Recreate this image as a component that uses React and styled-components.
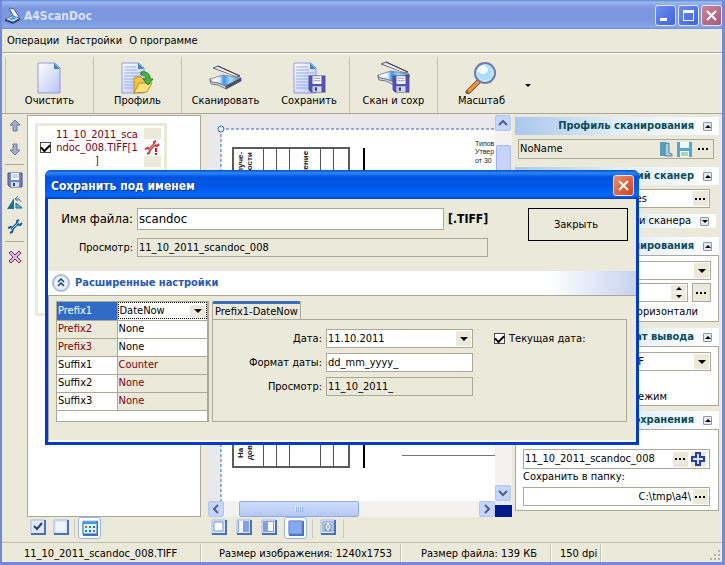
import React, { useState } from 'react'
import styled, { createGlobalStyle } from 'styled-components'

const GlobalStyle = createGlobalStyle`
  * {
    box-sizing: border-box;
  }
  body {
    margin: 0;
    color: #000000;
    font-family: "DejaVu Sans Condensed", "Noto Sans", sans-serif;
    font-size: 11px;
    line-height: 14px;
  }
  button, input, select {
    font: inherit;
    color: inherit;
    margin: 0;
    padding: 0;
    border: 0;
    border-radius: 0;
    background: none;
    min-width: 0;
  }
  svg {
    display: block;
    flex: none;
  }
`

const Styled = {
    Window: styled.div`
    display: flex;
    flex-direction: column;
    min-height: 100vh;
    background: #ebe9d9;
    border: solid #7489dc;
    border-width: 0 3px 3px 2px;
  `,
    TitleBar: styled.header`
    display: flex;
    align-items: center;
    gap: 2px;
    height: 29px;
    padding: 2px 0 0 2px;
    background: linear-gradient(#5c86d6 0, #9db9f0 2px, #7d98e2 8px, #7c96e0 20px, #82a8ec 27px, #708ddc 29px);
  `,
    Title: styled.h1`
    flex: 1;
    margin: 0;
    font-size: 12px;
    line-height: 18px;
    color: #d8e3fa;
  `,
    Caption: styled.button`
    display: flex;
    align-items: center;
    justify-content: center;
    width: 21px;
    height: 21px;
    border: 1px solid #dfe7fb;
    border-radius: 3px;
    background: ${props => props.$background || 'linear-gradient(135deg, #6b8df0, #3f62dd)'};
  `,
    Menu: styled.nav`
    display: flex;
    align-items: center;
    gap: 7px;
    height: 24px;
    padding: 0 5px;
    border-bottom: 1px solid #aca899;
  `,
    Toolbar: styled.div`
    display: flex;
    height: 61px;
    padding: 3px 3px 0;
    border-top: 1px solid #ffffff;
    border-bottom: 1px solid #aca899;
  `,
    ToolGroup: styled.div`
    display: flex;
    border-left: 1px solid #c6c3b3;
  `,
    Tool: styled.button`
    display: flex;
    flex-direction: column;
    align-items: center;
    width: ${props => props.$width || 87}px;
    padding-top: 3px;
  `,
    ToolArrow: styled.button`
    display: flex;
    align-items: center;
  `,
    Body: styled.main`
    display: flex;
    flex: 1;
    padding-top: 1px;
  `,
    Side: styled.div`
    display: flex;
    flex-direction: column;
    align-items: center;
    gap: 7px;
    width: 25px;
    padding: 3px;
  `,
    SideLine: styled.hr`
    width: 100%;
    margin: 0;
    border: 0;
    border-top: 1px solid #aca899;
  `,
    Column: styled.div`
    display: flex;
    flex-direction: column;
    width: 174px;
  `,
    Thumbs: styled.div`
    flex: 1;
    padding: 7px;
    background: #ffffff;
    border: 1px solid #aca899;
  `,
    Card: styled.div`
    display: flex;
    align-items: flex-start;
    gap: 4px;
    width: 132px;
    height: 193px;
    padding: 2px 3px 2px 2px;
    border: 3px solid #ebe9d9;
  `,
    CardName: styled.label`
    display: flex;
    flex: 1;
    align-items: center;
    gap: 4px;
    min-width: 0;
    color: #800010;
    line-height: 13px;
    text-align: center;
    overflow-wrap: anywhere;
    span {
      width: 84px;
    }
  `,
    CardAction: styled.button`
    display: flex;
    align-items: center;
    width: 17px;
    height: 39px;
    background: #ebe9d9;
  `,
    Check: styled.input`
    appearance: none;
    flex: none;
    display: grid;
    place-items: center;
    width: 11px;
    height: 11px;
    background: #ffffff;
    border: 1px solid #4a4a48;
    &:checked::after {
      content: '';
      width: 7px;
      height: 4px;
      margin-bottom: 2px;
      border: solid #000000;
      border-width: 0 0 2px 2px;
      transform: rotate(-45deg);
    }
  `,
    Strip: styled.div`
    display: flex;
    align-items: flex-start;
    gap: ${props => props.$gap || 3}px;
    height: 25px;
    padding: 0 1px;
  `,
    StripButton: styled.button`
    display: flex;
    align-items: center;
    justify-content: center;
    width: ${props => props.$pressed ? 23 : 20}px;
    height: ${props => props.$pressed ? 22 : 20}px;
    border-radius: 3px;
    border: 1px solid ${props => props.$pressed ? '#98b5e2' : 'transparent'};
    background: ${props => props.$pressed ? '#ffffff' : 'none'};
  `,
    StripLine: styled.span`
    width: 1px;
    height: 19px;
    margin-top: 2px;
    background: #cfccbc;
  `,
    Viewer: styled.div`
    display: flex;
    flex: 1;
    flex-direction: column;
    min-width: 0;
    margin-left: 7px;
  `,
    ViewerGrid: styled.div`
    display: grid;
    flex: 1;
    grid-template-columns: 1fr 17px;
    grid-template-rows: 1fr 16px;
    background: #e9e9ec;
  `,
    ScrollV: styled.div`
    display: flex;
    flex-direction: column;
    background: #f3f2ee;
  `,
    ScrollH: styled.div`
    display: flex;
    background: #f3f2ee;
  `,
    ScrollButton: styled.button`
    display: flex;
    align-items: center;
    justify-content: center;
    width: 16px;
    height: 16px;
    border: 1px solid #b2c5ef;
    border-radius: 2px;
    background: #c6d5fb;
  `,
    ThumbV: styled.div`
    width: 15px;
    height: 180px;
    margin: 14px 0 auto 1px;
    border: 1px solid #9fb6ea;
    border-radius: 2px;
    background: #c6d4fa;
  `,
    ThumbH: styled.div`
    display: flex;
    align-items: center;
    justify-content: center;
    width: 120px;
    margin: 0 auto 0 15px;
    border: 1px solid #8faae6;
    border-radius: 2px;
    background: linear-gradient(#cfdcfd, #b4c8f6);
  `,
    Corner: styled.div`
    margin-top: 4px;
    background: #001a8c;
  `,
    Options: styled.aside`
    display: flex;
    flex-direction: column;
    width: 204px;
    margin: 2px 3px 0;
  `,
    OptionsHead: styled.h2`
    display: flex;
    align-items: center;
    justify-content: flex-end;
    gap: 9px;
    height: ${props => props.$plain ? 14 : 18}px;
    margin: 0;
    padding-right: 7px;
    color: ${props => props.$plain ? '#000000' : '#0b4c57'};
    font-size: 11px;
    font-weight: ${props => props.$plain ? 'normal' : 'bold'};
    white-space: nowrap;
    background: linear-gradient(90deg, #a9c8ec, #e0edfb 50%, #ffffff);
  `,
    Toggle: styled.button`
    display: flex;
    align-items: center;
    justify-content: center;
    width: 9px;
    height: 9px;
    border: 1px solid #9296a0;
    border-radius: 1px;
    background: #e6e8ee;
  `,
    Group: styled.div`
    display: flex;
    flex-direction: column;
    gap: ${props => props.$gap || 3}px;
    height: ${props => props.$height}px;
    margin-bottom: ${props => props.$bottom || 0}px;
    padding: ${props => props.$padding || '5px 7px'};
    background: ${props => props.$plain ? 'none' : '#ffffff'};
    border: ${props => props.$plain ? 0 : 1}px solid #aca899;
    && > * {
      flex: none;
    }
  `,
    Row: styled.div`
    display: flex;
    gap: 4px;
  `,
    Field: styled.div`
    display: flex;
    align-items: center;
    flex: 1;
    min-width: 0;
    height: ${props => props.$height || 19}px;
    gap: ${props => props.$gap || 0}px;
    padding: 1px ${props => props.$right || 1}px 1px 1px;
    background: ${props => props.$readOnly ? '#ebe9d9' : '#ffffff'};
    border: 1px solid #aca899;
  `,
    Input: styled.input`
    flex: 1;
    width: 100%;
    padding-right: ${props => props.$right || 0}px;
    font-size: ${props => props.$size || 11}px;
    text-align: ${props => props.$align || 'left'};
  `,
    FieldButton: styled.button`
    display: flex;
    flex: none;
    align-items: center;
    justify-content: center;
    width: 15px;
    height: 15px;
    background: #ebe9d9;
  `,
    SideButton: styled.button`
    display: flex;
    align-items: center;
    justify-content: center;
    width: 19px;
    height: 19px;
    background: #ebe9d9;
    border: 1px solid #aca899;
  `,
    PlainLabel: styled.label`
    display: block;
    height: 16px;
    white-space: nowrap;
  `,
    RightText: styled.span`
    padding-right: ${props => props.$right}px;
    text-align: right;
    white-space: nowrap;
  `,
    SelectBox: styled.div`
    display: grid;
    grid-template-columns: 1fr 15px;
    align-items: center;
    min-width: 0;
    height: ${props => props.$height || 19}px;
    padding: 1px;
    background: #ffffff;
    border: ${props => props.$bare ? '1px dotted #000000' : '1px solid #aca899'};
    select {
      grid-area: 1 / 1 / 2 / 3;
      appearance: none;
      width: 100%;
    }
    span {
      grid-area: 1 / 2;
      display: flex;
      align-items: center;
      justify-content: center;
      height: ${props => props.$bare ? 13 : 15}px;
      background: #ebe9d9;
      pointer-events: none;
    }
  `,
    Spinner: styled.div`
    display: flex;
    flex-direction: column;
    gap: 1px;
    button {
      display: flex;
      align-items: center;
      justify-content: center;
      width: 15px;
      height: 7px;
      background: #ebe9d9;
    }
  `,
    Status: styled.footer`
    display: flex;
    height: 20px;
    border-top: 1px solid #c2bfae;
  `,
    StatusCell: styled.div`
    width: ${props => props.$width}px;
    padding: 3px 0 0 ${props => props.$left}px;
    margin-top: 1px;
    white-space: nowrap;
    border-right: 1px solid #c2bfae;
    box-shadow: 1px 0 #ffffff;
  `,
    Grip: styled.div`
    display: flex;
    align-items: flex-end;
    margin-left: auto;
    padding: 1px;
  `,
    // floats over the main window
    Dialog: styled.section`
    position: absolute;
    top: 170px;
    left: 45px;
    right: 86px;
    display: flex;
    flex-direction: column;
    background: #ebe9d9;
    border: solid #003bc9;
    border-width: 0 3px 3px;
    border-radius: 6px 6px 0 0;
  `,
    DialogTitle: styled.div`
    display: flex;
    align-items: center;
    height: 29px;
    margin: 0 -3px;
    padding: 2px 5px 0 6px;
    border-radius: 6px 6px 0 0;
    background: linear-gradient(#0a4fbe 0, #2d86fb 3px, #0053df 7px, #0057e7 16px, #0066fb 23px, #0064f8 26px, #003bb4 29px);
    h2 {
      flex: 1;
      margin: 0;
      color: #ffffff;
      font-size: 12px;
      line-height: 18px;
      text-shadow: 1px 1px #0a2f80;
    }
  `,
    NameArea: styled.div`
    display: grid;
    grid-template-columns: 85px 307px 40px 1fr;
    grid-template-rows: 22px 19px;
    column-gap: 4px;
    row-gap: 8px;
    align-items: center;
    padding: 9px 8px 14px 0;
  `,
    Label: styled.label`
    font-size: ${props => props.$size || 11}px;
    text-align: right;
    white-space: nowrap;
  `,
    Extension: styled.b`
    font-size: 12px;
  `,
    Preview: styled.div`
    display: flex;
    grid-column: 2 / 4;
  `,
    CloseButton: styled.button`
    grid-row: 1 / 3;
    grid-column: 4;
    align-self: start;
    justify-self: end;
    width: 100px;
    height: 33px;
    padding-right: 4px;
    border: 1px solid #000000;
  `,
    Advanced: styled.button`
    display: flex;
    align-items: center;
    gap: 5px;
    width: 100%;
    height: 25px;
    padding-left: 4px;
    color: #2859b6;
    font-weight: bold;
    background: linear-gradient(90deg, #ffffff 85%, #c6d3ef);
    border-bottom: 1px solid #aca899;
  `,
    AdvancedBody: styled.div`
    display: flex;
    gap: 3px;
    padding: 5px 9px 18px 7px;
    border-left: 1px solid #aca899;
    border-bottom: 2px solid #f8f7f0;
  `,
    TableBox: styled.div`
    width: 153px;
    height: 121px;
    background: #ffffff;
    border: 1px solid #aca899;
    border-right-width: 2px;
  `,
    Table: styled.table`
    width: 100%;
    table-layout: fixed;
    border-collapse: collapse;
    th, td {
      height: 18px;
      padding: 0 1px;
      font-weight: normal;
      text-align: left;
      border-bottom: 1px solid #aca899;
    }
    th {
      width: 60px;
      border-right: 1px solid #aca899;
    }
    td:has(select) {
      padding: 0;
    }
  `,
    NameCell: styled.th`
    color: ${props => props.$selected ? '#ffffff' : props.$prefix ? '#800010' : '#000000'};
    background: ${props => props.$selected ? '#316ac5' : props.$prefix ? '#ebe9d9' : '#ffffff'};
  `,
    ValueCell: styled.td`
    color: ${props => props.$prefix ? '#000000' : '#800010'};
    background: ${props => props.$prefix ? '#ffffff' : '#ebe9d9'};
  `,
    TabPane: styled.div`
    display: flex;
    flex: 1;
    flex-direction: column;
  `,
    Tab: styled.button`
    align-self: flex-start;
    height: 19px;
    margin-bottom: -1px;
    padding: 0 2px;
    white-space: nowrap;
    background: #ebe9d9;
    border: 1px solid #aca899;
    border-top: 3px solid #3b6dbd;
    border-bottom: 0;
    border-radius: 2px 2px 0 0;
  `,
    TabBody: styled.div`
    display: grid;
    flex: 1;
    grid-template-columns: 109px 147px 1fr;
    grid-auto-rows: 19px;
    align-items: center;
    align-content: start;
    gap: 5px 4px;
    padding-top: 9px;
    border: 1px solid #aca899;
  `,
    CheckLabel: styled.label`
    display: flex;
    align-items: center;
    gap: 4px;
    margin-left: 17px;
  `
}

const Arrow = ({ up, size = 8 }) => (
    <svg width={size} height={size / 2} viewBox="0 0 8 4">
        <path d={up ? 'M0 4h8L4 0z' : 'M0 0h8L4 4z'} />
    </svg>
)

const Dots = () => (
    <svg width="11" height="2" viewBox="0 0 11 2">
        <path d="M0 0h2v2H0zM4 0h2v2H4zM8 0h2v2H8z" />
    </svg>
)

const Chevron = ({ turn = 0 }) => (
    <svg width="10" height="10" viewBox="0 0 10 10">
        <path
            d="M1 7l4-4 4 4"
            fill="none"
            stroke="#4d6185"
            strokeWidth="2"
            transform={`rotate(${turn} 5 5)`}
        />
    </svg>
)

const Cross = ({ size = 13 }) => (
    <svg width={size} height={size} viewBox="0 0 13 13">
        <path d="M2 2l9 9M11 2l-9 9" stroke="#ffffff" strokeWidth="2" />
    </svg>
)

const Floppy = ({ x = 0, y = 0, size = 16, color = '#5650b0' }) => (
    <svg x={x} y={y} width={size} height={size} viewBox="0 0 16 16">
        <path d="M1 1h14v14H3l-2-2z" fill={color} stroke="#4a4a94" />
        <path d="M4 1h8v7H4z" fill="#f4f6ff" />
        <path d="M5 3h6M5 5h6" stroke="#a9b0c4" />
        <path d="M4 10h8v5H4z" fill="#d5daea" />
        <path d="M6 11h2v3H6z" fill="#34407c" />
    </svg>
)

const PageShape = ({ lines }) => (
    <>
        <path d="M5 3h17l5 5v25H5z" fill="url(#paper)" stroke="#8d9ad6" />
        <path d="M21 3l6 6h-6z" fill="#3f87b8" />
        {lines && (
            <path
                d="M7 7h12M7 10h13M7 13h18M7 16h18M7 19h18M7 22h18M7 25h18M7 28h18"
                stroke="#8fabe6"
            />
        )}
    </>
)

const ScannerShape = () => (
    <>
        <path d="M1 19l13-4 18 3-15 8-8-3-8-1z" fill="url(#glass)" stroke="#8b90a2" />
        <path d="M1 19l2 3 6 1 8 3v3l-8-4-7-1z" fill="#d4d8e2" stroke="#747989" />
        <path d="M17 26l15-8v3l-15 8z" fill="#454a5c" stroke="#5d6272" />
        <path d="M4 8l5-2 22 10-4 1-4-2z" fill="#d4d6de" stroke="#686c78" />
        <path d="M8 8l17 7" stroke="#ffffff" />
        <path d="M9 6l22 10" stroke="#3d414d" />
    </>
)

const ToolIcon = ({ kind }) => (
    <svg width="33" height="34" viewBox="0 0 33 34">
        <defs>
            <linearGradient id="paper" x2="1" y2="1">
                <stop stopColor="#ffffff" />
                <stop offset="1" stopColor="#b9c3fa" />
            </linearGradient>
            <linearGradient id="glass">
                <stop stopColor="#ffffff" />
                <stop offset="0.3" stopColor="#e6f2fd" />
                <stop offset="0.45" stopColor="#3f92dd" />
                <stop offset="0.65" stopColor="#9fdcfb" />
                <stop offset="1" stopColor="#5b86c4" />
            </linearGradient>
        </defs>
        {kind === 'clear' && <PageShape />}
        {kind === 'profile' && (
            <>
                <g transform="translate(-4 0)"><PageShape lines /></g>
                <path d="M13 19l1-2h6l2 2h6v5H18l-4 9h-1z" fill="#f2c24a" stroke="#b98d24" />
                <path d="M18 23h13l-5 9-13 1z" fill="#ffe27c" stroke="#b88a24" />
                <path
                    d="M20 12c6-1 9 2 9 7h3l-5 6-5-6h3c0-3-1-4-5-4z"
                    fill="#43ba3c"
                    stroke="#217b24"
                />
            </>
        )}
        {kind === 'scan' && <ScannerShape />}
        {kind === 'save' && (
            <>
                <g transform="translate(-4 0)"><PageShape lines /></g>
                <Floppy x={15} y={15} size={18} />
            </>
        )}
        {kind === 'scansave' && (
            <>
                <g transform="translate(0 -4)"><ScannerShape /></g>
                <Floppy x={15} y={15} size={18} />
            </>
        )}
        {kind === 'zoom' && (
            <>
                <path d="M14 21L3 32" stroke="#875336" strokeWidth="5" strokeLinecap="round" />
                <path d="M13 22L4 31" stroke="#f09a3e" strokeWidth="3" strokeLinecap="round" />
                <circle cx="20" cy="13" r="10" fill="#a7defb" stroke="#7179b0" strokeWidth="2" />
                <circle cx="20" cy="13" r="8" fill="none" stroke="#e3f5ff" />
                <ellipse cx="18" cy="10" rx="5" ry="4" fill="#f4fcff" />
            </>
        )}
    </svg>
)

const WrenchShape = ({ color, light }) => (
    <g fill="none">
        <g stroke={color}>
            <path d="M5 11l6-6" strokeWidth="3" />
            <path d="M12 2l-2 1v3l3 1 2-2" strokeWidth="2" />
            <path d="M1 10l3-1 2 2-1 3-2 1" strokeWidth="2" />
        </g>
        <path d="M5 11l6-6" stroke={light} />
    </g>
)

const SideIcon = ({ kind }) => (
    <svg width="16" height="16" viewBox="0 0 16 16">
        {kind === 'up' && <path d="M8 2l5 5h-3v6H6V7H3z" fill="#a3abd0" stroke="#707999" />}
        {kind === 'down' && <path d="M8 14l5-5h-3V3H6v6H3z" fill="#a3abd0" stroke="#707999" />}
        {kind === 'save' && <Floppy color="#7186bd" />}
        {kind === 'rotate' && (
            <>
                <path d="M0 14L7 3v11z" fill="#157792" />
                <path d="M9 8v5h6z" fill="#5fb4cb" stroke="#156b8b" />
                <path d="M9 4h3l2 3M11 1L8 4l3 2" fill="none" stroke="#2f7fa8" />
            </>
        )}
        {kind === 'tools' && <WrenchShape color="#1e5f94" light="#8edaf3" />}
        {kind === 'remove' && (
            <path
                d="M2 4l2-2 4 4 4-4 2 2-4 4 4 4-2 2-4-4-4 4-2-2 4-4z"
                fill="#c8c0f2"
                stroke="#8d2947"
            />
        )}
    </svg>
)

const ViewIcon = ({ kind }) => (
    <svg width="16" height="16" viewBox="0 0 16 16">
        <path d="M1 1h14v14H1z" fill="#dfe9ff" stroke="#a3bbe9" />
        <path d="M15 1v14H1" fill="none" stroke="#4a70b8" strokeWidth="2" />
        {kind === 'check' && <path d="M4 7l3 3 5-6" fill="none" stroke="#223e72" strokeWidth="2" />}
        {kind === 'blank' && <path d="M3 3h9v9H3z" fill="#f1f5ff" />}
        {kind === 'frame' && <path d="M3 3h9v9H3z" fill="#ffffff" stroke="#6b91d3" />}
        {kind === 'left' && (
            <>
                <path d="M2 2h11v11H2z" fill="#f8faff" />
                <path d="M7 2h6v11H7z" fill="#7f9fe4" />
                <path d="M2 2h1v11H2z" fill="#7f9fe4" />
            </>
        )}
        {kind === 'right' && (
            <>
                <path d="M2 2h11v11H2z" fill="#7f9fe4" />
                <path d="M7 3h5v9H7z" fill="#f8faff" />
            </>
        )}
        {kind === 'full' && <path d="M1 1h13v13H1z" fill="#89a8ed" stroke="#6489d8" />}
        {kind === 'fit' && (
            <>
                <path d="M3 3h10v9H3z" fill="#ffffff" stroke="#6688c5" />
                <path d="M7 5H5v6h2M9 5h2v6H9M8 6v4" fill="none" stroke="#3866ad" />
            </>
        )}
        {kind === 'grid' && (
            <>
                <path d="M1 2h14v12H1z" fill="#d9f2ff" stroke="#1c76c5" />
                <path d="M1 2h14v2H1z" fill="#3c9be3" />
                <path d="M3 6h2v2H3zM11 10h2v2h-2z" fill="#cc5c49" />
                <path d="M7 6h2v2H7zM3 10h2v2H3z" fill="#378c46" />
                <path d="M11 6h2v2h-2zM7 10h2v2H7z" fill="#2a67b2" />
            </>
        )}
    </svg>
)

const AppIcon = () => (
    <svg width="18" height="18" viewBox="0 0 18 18">
        <path d="M5 1l5 1 5 8-4 2z" fill="#eef6ff" stroke="#47629d" />
        <path d="M1 12l7-3 8 2-7 4z" fill="#eaf6ff" stroke="#5a73a4" />
        <path d="M4 12l5-2 4 1-4 2z" fill="#3c9be5" />
        <path d="M1 12l8 3 7-4v2l-7 4-8-3z" fill="#3c4668" />
    </svg>
)

// scanned form under the dialog
const ScannedPage = () => (
    <svg width="100%" height="386" fontFamily="Liberation Sans, sans-serif">
        <rect x="13" y="14" width="600" height="600" fill="#ffffff" />
        <path d="M13 14h600M13 14v600" stroke="#3767b3" strokeDasharray="3 2" />
        <circle cx="13" cy="14" r="3" fill="#e9f0ff" stroke="#3767b3" />
        <path d="M25 33h116v319H25z" fill="none" stroke="#5b5b5b" strokeWidth="2" />
        <path
            d="M55 33v319M68 33v319M81 33v319M112 33v319M125 33v319"
            stroke="#555555"
            shapeRendering="crispEdges"
        />
        <path d="M156 33v320" stroke="#000000" strokeWidth="2" />
        <path d="M194 340h120" stroke="#777777" shapeRendering="crispEdges" />
        <g fontSize="8" fill="#222222" fontWeight="bold">
            <text transform="translate(35 58) rotate(-90)">луче-</text>
            <text transform="translate(44 60) rotate(-90)">ности</text>
            <text transform="translate(100 60) rotate(-90)">жение</text>
            <text transform="translate(35 343) rotate(-90)">На</text>
            <text transform="translate(44 345) rotate(-90)">дове</text>
        </g>
        <g fontSize="7" fill="#222222">
            <text x="267" y="31">Типов</text>
            <text x="267" y="39">Утвер</text>
            <text x="267" y="48">от 30</text>
        </g>
    </svg>
)

const SelectField = ({ label, options, height, bare }) => (
    <Styled.SelectBox $height={height} $bare={bare}>
        <select aria-label={label}>
            {options.map(option => <option key={option}>{option}</option>)}
        </select>
        <span><Arrow /></span>
    </Styled.SelectBox>
)

const OptionsHeader = ({ children, plain }) => (
    <Styled.OptionsHead $plain={plain}>
        {children}
        <Styled.Toggle aria-label={children}>
            <Arrow up={!plain} size={6} />
        </Styled.Toggle>
    </Styled.OptionsHead>
)

const rows = [
    { name: 'Prefix1', value: 'DateNow' },
    { name: 'Prefix2', value: 'None' },
    { name: 'Prefix3', value: 'None' },
    { name: 'Suffix1', value: 'Counter' },
    { name: 'Suffix2', value: 'None' },
    { name: 'Suffix3', value: 'None' }
]

const SaveDialog = () => {
    const [name, setName] = useState('scandoc')
    const [format, setFormat] = useState('dd_mm_yyyy_')

    return (
        <Styled.Dialog role="dialog" aria-labelledby="dialogTitle">
            <Styled.DialogTitle>
                <h2 id="dialogTitle">Сохранить под именем</h2>
                <Styled.Caption
                    aria-label="Закрыть окно"
                    $background="linear-gradient(135deg, #ee8c6c, #d1401c)"
                >
                    <Cross />
                </Styled.Caption>
            </Styled.DialogTitle>
            <Styled.NameArea>
                <Styled.Label htmlFor="fileName" $size={13}>Имя файла:</Styled.Label>
                <Styled.Field $height={22}>
                    <Styled.Input
                        id="fileName"
                        $size={13}
                        value={name}
                        onChange={e => setName(e.target.value)}
                    />
                </Styled.Field>
                <Styled.Extension>[.TIFF]</Styled.Extension>
                <Styled.CloseButton>Закрыть</Styled.CloseButton>
                <Styled.Label htmlFor="filePreview">Просмотр:</Styled.Label>
                <Styled.Preview>
                    <Styled.Field $readOnly>
                        <Styled.Input id="filePreview" readOnly value={`11_10_2011_${name}_008`} />
                    </Styled.Field>
                </Styled.Preview>
            </Styled.NameArea>
            <Styled.Advanced>
                <svg width="18" height="18" viewBox="0 0 18 18">
                    <circle cx="9" cy="9" r="8" fill="#edf2ff" stroke="#a7bbe5" strokeWidth="2" />
                    <path d="M6 8l3-3 3 3M6 12l3-3 3 3" fill="none" stroke="#143a7c" strokeWidth="1.5" />
                </svg>
                Расширенные настройки
            </Styled.Advanced>
            <Styled.AdvancedBody>
                <Styled.TableBox>
                    <Styled.Table>
                        <tbody>
                            {rows.map((row, index) => {
                                const prefix = row.name.startsWith('Prefix')
                                return (
                                    <tr key={row.name}>
                                        <Styled.NameCell $selected={index === 0} $prefix={prefix}>
                                            {row.name}
                                        </Styled.NameCell>
                                        <Styled.ValueCell $prefix={prefix}>
                                            {index === 0 ? (
                                                <SelectField
                                                    bare
                                                    height={17}
                                                    label={row.name}
                                                    options={[row.value, 'None', 'Counter']}
                                                />
                                            ) : row.value}
                                        </Styled.ValueCell>
                                    </tr>
                                )
                            })}
                        </tbody>
                    </Styled.Table>
                </Styled.TableBox>
                <Styled.TabPane>
                    <Styled.Tab>Prefix1-DateNow</Styled.Tab>
                    <Styled.TabBody>
                        <Styled.Label>Дата:</Styled.Label>
                        <SelectField label="Дата" options={['11.10.2011']} />
                        <Styled.CheckLabel>
                            <Styled.Check type="checkbox" defaultChecked />
                            Текущая дата:
                        </Styled.CheckLabel>
                        <Styled.Label htmlFor="dateFormat">Формат даты:</Styled.Label>
                        <Styled.Field>
                            <Styled.Input
                                id="dateFormat"
                                value={format}
                                onChange={e => setFormat(e.target.value)}
                            />
                        </Styled.Field>
                        <span />
                        <Styled.Label htmlFor="datePreview">Просмотр:</Styled.Label>
                        <Styled.Field $readOnly>
                            <Styled.Input id="datePreview" readOnly value="11_10_2011_" />
                        </Styled.Field>
                    </Styled.TabBody>
                </Styled.TabPane>
            </Styled.AdvancedBody>
        </Styled.Dialog>
    )
}

const OptionsPanel = () => (
    <Styled.Options>
        <OptionsHeader>Профиль сканирования</OptionsHeader>
        <Styled.Group $plain $padding="4px 5px 0 3px" $height={32}>
            <Styled.Field $readOnly $height={20} $gap={4} $right={2}>
                <Styled.Input aria-label="Профиль" defaultValue="NoName" />
                <Styled.FieldButton aria-label="Открыть профиль">
                    <svg width="14" height="16" viewBox="0 0 14 16">
                        <path d="M1 1h6l2 2v12H1z" fill="#5d9cba" />
                        <path d="M6 3l4-1v10l3 1v2H6z" fill="#a5cbdf" stroke="#4e86a4" />
                    </svg>
                </Styled.FieldButton>
                <Styled.FieldButton aria-label="Сохранить профиль">
                    <svg width="15" height="15" viewBox="0 0 15 15">
                        <path d="M0 0h15v15H0z" fill="#5aa2d8" />
                        <path d="M3 0h9v6H3zM3 9h9v6H3z" fill="#edf8ff" />
                        <path d="M4 11h7M4 13h7" stroke="#62b964" />
                    </svg>
                </Styled.FieldButton>
                <Styled.FieldButton aria-label="Ещё"><Dots /></Styled.FieldButton>
            </Styled.Field>
        </Styled.Group>
        <OptionsHeader>Текущий сканер</OptionsHeader>
        <Styled.Group $plain $padding="4px 9px 0 7px" $height={28}>
            <Styled.Field>
                <Styled.Input
                    aria-label="Сканер"
                    $align="right"
                    $right={46}
                    defaultValue="HP Scanjet series"
                />
                <Styled.FieldButton aria-label="Выбрать сканер"><Dots /></Styled.FieldButton>
            </Styled.Field>
        </Styled.Group>
        <Styled.Group $plain $padding="1px 3px 0" $height={24}>
            <OptionsHeader plain>Настройки сканера</OptionsHeader>
        </Styled.Group>
        <OptionsHeader>Настройки сканирования</OptionsHeader>
        <Styled.Group $height={67} $bottom={6}>
            <SelectField label="Режим" options={['Цветной']} />
            <Styled.Row>
                <Styled.Field>
                    <Styled.Input aria-label="Разрешение" defaultValue="150" />
                    <Styled.Spinner>
                        <button aria-label="Больше"><Arrow up size={6} /></button>
                        <button aria-label="Меньше"><Arrow size={6} /></button>
                    </Styled.Spinner>
                </Styled.Field>
                <Styled.SideButton aria-label="Параметры разрешения"><Dots /></Styled.SideButton>
            </Styled.Row>
            <Styled.RightText $right={13}>Отразить по горизонтали</Styled.RightText>
        </Styled.Group>
        <OptionsHeader>Формат вывода</OptionsHeader>
        <Styled.Group $height={60} $bottom={5} $gap={19}>
            <SelectField label="Формат" options={['Многостраничный TIFF']} />
            <Styled.RightText $right={44}>Многостраничный режим</Styled.RightText>
        </Styled.Group>
        <OptionsHeader>Параметры сохранения</OptionsHeader>
        <Styled.Group $height={82} $gap={1} $padding="2px 8px 0 7px">
            <Styled.PlainLabel htmlFor="saveName">Имя файла:</Styled.PlainLabel>
            <Styled.Field $height={20} $gap={3} $right={3}>
                <Styled.Input id="saveName" defaultValue="11_10_2011_scandoc_008" />
                <Styled.FieldButton aria-label="Шаблон имени"><Dots /></Styled.FieldButton>
                <Styled.FieldButton aria-label="Добавить">
                    <svg width="15" height="15" viewBox="0 0 15 15">
                        <path
                            d="M5 1h4v4h4v4H9v4H5V9H1V5h4z"
                            fill="#d5e1ff"
                            stroke="#2e3f9b"
                            strokeWidth="2"
                        />
                    </svg>
                </Styled.FieldButton>
            </Styled.Field>
            <Styled.PlainLabel htmlFor="saveFolder">Сохранить в папку:</Styled.PlainLabel>
            <Styled.Field>
                <Styled.Input id="saveFolder" $align="right" $right={2} defaultValue={'C:\\tmp\\a4\\'} />
                <Styled.FieldButton aria-label="Выбрать папку"><Dots /></Styled.FieldButton>
            </Styled.Field>
        </Styled.Group>
    </Styled.Options>
)

const App = () => (
    <>
        <GlobalStyle />
        <Styled.Window>
            <Styled.TitleBar>
                <AppIcon />
                <Styled.Title>A4ScanDoc</Styled.Title>
                <Styled.Caption aria-label="Свернуть">
                    <svg width="13" height="13"><path d="M1 9h7v3H1z" fill="#ffffff" /></svg>
                </Styled.Caption>
                <Styled.Caption aria-label="Развернуть">
                    <svg width="13" height="13" shapeRendering="crispEdges">
                        <path d="M1 1h11v11H1zM2 4v7h9V4z" fill="#ffffff" fillRule="evenodd" />
                    </svg>
                </Styled.Caption>
                <Styled.Caption
                    aria-label="Закрыть программу"
                    $background="linear-gradient(135deg, #c98398, #a85a79)"
                >
                    <Cross />
                </Styled.Caption>
            </Styled.TitleBar>
            <Styled.Menu>
                <button>Операции</button>
                <button>Настройки</button>
                <button>О программе</button>
            </Styled.Menu>
            <Styled.Toolbar>
                <Styled.ToolGroup>
                    <Styled.Tool><ToolIcon kind="clear" />Очистить</Styled.Tool>
                </Styled.ToolGroup>
                <Styled.ToolGroup>
                    <Styled.Tool><ToolIcon kind="profile" />Профиль</Styled.Tool>
                </Styled.ToolGroup>
                <Styled.ToolGroup>
                    <Styled.Tool><ToolIcon kind="scan" />Сканировать</Styled.Tool>
                    <Styled.Tool $width={80}><ToolIcon kind="save" />Сохранить</Styled.Tool>
                </Styled.ToolGroup>
                <Styled.ToolGroup>
                    <Styled.Tool><ToolIcon kind="scansave" />Скан и сохр</Styled.Tool>
                </Styled.ToolGroup>
                <Styled.ToolGroup>
                    <Styled.Tool><ToolIcon kind="zoom" />Масштаб</Styled.Tool>
                    <Styled.ToolArrow aria-label="Выбор масштаба"><Arrow size={6} /></Styled.ToolArrow>
                </Styled.ToolGroup>
            </Styled.Toolbar>
            <Styled.Body>
                <Styled.Side>
                    <button aria-label="Вверх"><SideIcon kind="up" /></button>
                    <button aria-label="Вниз"><SideIcon kind="down" /></button>
                    <Styled.SideLine />
                    <button aria-label="Сохранить файл"><SideIcon kind="save" /></button>
                    <button aria-label="Повернуть"><SideIcon kind="rotate" /></button>
                    <button aria-label="Параметры"><SideIcon kind="tools" /></button>
                    <Styled.SideLine />
                    <button aria-label="Удалить"><SideIcon kind="remove" /></button>
                </Styled.Side>
                <Styled.Column>
                    <Styled.Thumbs>
                        <Styled.Card>
                            <Styled.CardName>
                                <Styled.Check type="checkbox" defaultChecked />
                                <span>11_10_2011_scandoc_008.TIFF[1]</span>
                            </Styled.CardName>
                            <Styled.CardAction aria-label="Исправить">
                                <svg width="17" height="17" viewBox="0 0 17 17">
                                    <path d="M0 0h17v17H0z" fill="#ffffff" />
                                    <WrenchShape color="#d23440" light="#f6b9bd" />
                                    <path d="M11 9h2v4h-2zM11 14h2v2h-2z" fill="#d01820" />
                                </svg>
                            </Styled.CardAction>
                        </Styled.Card>
                    </Styled.Thumbs>
                    <Styled.Strip>
                        <Styled.StripButton aria-label="Отметить все"><ViewIcon kind="check" /></Styled.StripButton>
                        <Styled.StripButton aria-label="Снять отметки"><ViewIcon kind="blank" /></Styled.StripButton>
                        <Styled.StripLine />
                        <Styled.StripButton $pressed aria-label="Миниатюры"><ViewIcon kind="grid" /></Styled.StripButton>
                    </Styled.Strip>
                </Styled.Column>
                <Styled.Viewer>
                    <Styled.ViewerGrid>
                        <ScannedPage />
                        <Styled.ScrollV>
                            <Styled.ScrollButton aria-label="Прокрутить вверх"><Chevron /></Styled.ScrollButton>
                            <Styled.ThumbV />
                            <Styled.ScrollButton aria-label="Прокрутить вниз"><Chevron turn={180} /></Styled.ScrollButton>
                        </Styled.ScrollV>
                        <Styled.ScrollH>
                            <Styled.ScrollButton aria-label="Прокрутить влево"><Chevron turn={-90} /></Styled.ScrollButton>
                            <Styled.ThumbH>
                                <svg width="8" height="6" shapeRendering="crispEdges">
                                    <path d="M0 0h1v5H0zM2 0h1v5H2zM4 0h1v5H4zM6 0h1v5H6z" fill="#eef4fe" />
                                    <path d="M1 1h1v5H1zM3 1h1v5H3zM5 1h1v5H5zM7 1h1v5H7z" fill="#8cb0f8" />
                                </svg>
                            </Styled.ThumbH>
                            <Styled.ScrollButton aria-label="Прокрутить вправо"><Chevron turn={90} /></Styled.ScrollButton>
                        </Styled.ScrollH>
                        <Styled.Corner />
                    </Styled.ViewerGrid>
                    <Styled.Strip $gap={5}>
                        <Styled.StripButton aria-label="Рамка"><ViewIcon kind="frame" /></Styled.StripButton>
                        <Styled.StripButton aria-label="Слева"><ViewIcon kind="left" /></Styled.StripButton>
                        <Styled.StripButton aria-label="Справа"><ViewIcon kind="right" /></Styled.StripButton>
                        <Styled.StripButton $pressed aria-label="Вся страница"><ViewIcon kind="full" /></Styled.StripButton>
                        <Styled.StripLine />
                        <Styled.StripButton aria-label="По размеру"><ViewIcon kind="fit" /></Styled.StripButton>
                        <Styled.StripLine />
                    </Styled.Strip>
                </Styled.Viewer>
                <OptionsPanel />
            </Styled.Body>
            <Styled.Status>
                <Styled.StatusCell $width={199} $left={22}>11_10_2011_scandoc_008.TIFF</Styled.StatusCell>
                <Styled.StatusCell $width={200} $left={18}>Размер изображения: 1240x1753</Styled.StatusCell>
                <Styled.StatusCell $width={150} $left={20}>Размер файла: 139 КБ</Styled.StatusCell>
                <Styled.StatusCell $width={50} $left={9}>150 dpi</Styled.StatusCell>
                <Styled.Grip>
                    <svg width="11" height="11">
                        <path
                            d="M8 0h2v2H8zM4 4h2v2H4zM8 4h2v2H8zM0 8h2v2H0zM4 8h2v2H4zM8 8h2v2H8z"
                            fill="#b8b5a4"
                        />
                    </svg>
                </Styled.Grip>
            </Styled.Status>
        </Styled.Window>
        <SaveDialog />
    </>
)

export default App
